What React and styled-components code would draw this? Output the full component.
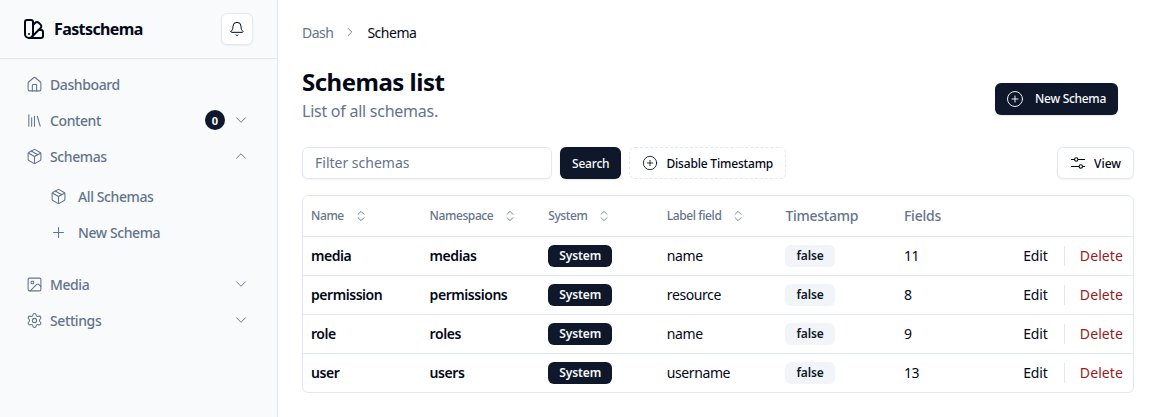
import React from 'react';
import styled, { createGlobalStyle } from 'styled-components';
import {
  Bell, ChevronDown, ChevronRight, ChevronUp, ChevronsUpDown, CirclePlus, House, Image, Library,
  Package, Plus, Settings, SwatchBook,
} from 'lucide-react';

const GlobalStyle = createGlobalStyle`
  * { box-sizing: border-box; }
  html, body { margin: 0; padding: 0; background: #fff; }
  body { font-family: "Noto Sans", "Liberation Sans", sans-serif; color: #020817; }
`;

const schemas = [
  { name: 'media', namespace: 'medias', label: 'name', fields: 11 },
  { name: 'permission', namespace: 'permissions', label: 'resource', fields: 8 },
  { name: 'role', namespace: 'roles', label: 'name', fields: 9 },
  { name: 'user', namespace: 'users', label: 'username', fields: 13 },
];

const Layout = styled.div`
  display: flex;
  width: 1156px;
  height: 417px;
  overflow: hidden;
`;

const Sidebar = styled.aside`
  width: 278px;
  flex-shrink: 0;
  background: #f8fafc;
  border-right: 1px solid #e2e8f0;
`;

const SidebarHead = styled.div`
  height: 59px;
  display: flex;
  align-items: center;
  justify-content: space-between;
  padding: 0 24px 1px 22px;
  border-bottom: 1px solid #e2e8f0;
`;

const Brand = styled.div`
  display: flex;
  align-items: center;
  gap: 8px;
  font-size: 16px;
  font-weight: 700;
  letter-spacing: -0.6px;
  color: #020817;
`;

const BellButton = styled.button`
  width: 32px;
  height: 32px;
  padding: 0;
  display: flex;
  align-items: center;
  justify-content: center;
  background: #fff;
  border: 1px solid #e2e8f0;
  border-radius: 6px;
  box-shadow: 0 1px 2px rgba(0, 0, 0, 0.05);
  color: #020817;
`;

const Nav = styled.nav`
  display: flex;
  flex-direction: column;
  padding-top: 7px;
`;

const NavItem = styled.div`
  height: 36px;
  display: flex;
  align-items: center;
  padding: 0 27px 0 ${p => (p.$sub ? '50px' : '26px')};
  gap: ${p => (p.$sub ? '11px' : '7px')};
  font-size: 14px;
  font-weight: 500;
  letter-spacing: -0.4px;
  color: #64748b;
`;

const NavLabel = styled.span`
  flex: 1;
`;

const CountBadge = styled.span`
  width: 20px;
  height: 20px;
  border-radius: 50%;
  display: flex;
  align-items: center;
  justify-content: center;
  background: #0f172a;
  color: #f8fafc;
  font-size: 11px;
  font-weight: 700;
  letter-spacing: 0;
`;

const SubNav = styled.div`
  display: flex;
  flex-direction: column;
  padding: 4px 0 16px;
`;

const Main = styled.main`
  flex: 1;
  min-width: 0;
  padding: 14px 22px 0 24px;
`;

const Crumbs = styled.div`
  height: 36px;
  display: flex;
  align-items: center;
  gap: 10px;
  font-size: 14px;
  letter-spacing: -0.5px;
  color: #64748b;
`;

const CrumbCurrent = styled.span`
  color: #020817;
`;

const TitleRow = styled.div`
  display: flex;
  align-items: center;
  justify-content: space-between;
  margin-top: 16px;
  padding-right: 16px;
`;

const Title = styled.h1`
  margin: 0 0 1px;
  font-size: 24px;
  line-height: 32px;
  font-weight: 700;
  letter-spacing: -0.5px;
  color: #020817;
`;

const Subtitle = styled.p`
  margin: 0;
  font-size: 16px;
  line-height: 24px;
  letter-spacing: -0.25px;
  color: #64748b;
`;

const PrimaryButton = styled.button`
  height: 32px;
  display: flex;
  align-items: center;
  padding: 0 12px;
  background: #0f172a;
  border: 0;
  border-radius: 6px;
  color: #f8fafc;
  font-family: inherit;
  font-size: 12px;
  font-weight: 500;
  letter-spacing: -0.2px;
  box-shadow: 0 1px 2px rgba(0, 0, 0, 0.1);
`;

const NewSchemaButton = styled(PrimaryButton)`
  margin-top: 8px;
  gap: 11px;
  padding-left: 11px;
  letter-spacing: -0.3px;
`;

const Toolbar = styled.div`
  display: flex;
  align-items: center;
  gap: 8px;
  margin-top: 24px;
`;

const FilterInput = styled.input`
  width: 250px;
  height: 32px;
  padding: 0 12px 2px;
  background: #fff;
  border: 1px solid #e2e8f0;
  border-radius: 6px;
  font-family: inherit;
  font-size: 14px;
  box-shadow: 0 1px 2px rgba(0, 0, 0, 0.05);
  &::placeholder { color: #64748b; opacity: 1; }
`;

const DashedButton = styled.button`
  height: 32px;
  display: flex;
  align-items: center;
  gap: 8px;
  padding: 0 12px;
  background: #fff;
  border: 1px dashed #e2e8f0;
  border-radius: 6px;
  color: #020817;
  font-family: inherit;
  font-size: 12px;
  font-weight: 500;
  letter-spacing: -0.18px;
`;

const ViewButton = styled.button`
  height: 32px;
  margin-left: auto;
  display: flex;
  align-items: center;
  gap: 8px;
  padding: 0 12px;
  background: #fff;
  border: 1px solid #e2e8f0;
  border-radius: 6px;
  color: #020817;
  font-family: inherit;
  font-size: 12px;
  font-weight: 500;
  box-shadow: 0 1px 2px rgba(0, 0, 0, 0.05);
`;

const TableWrap = styled.div`
  margin-top: 16px;
  border: 1px solid #e2e8f0;
  border-radius: 6px;
  overflow: hidden;
`;

const Table = styled.table`
  width: 100%;
  border-collapse: collapse;
  table-layout: fixed;
  font-size: 14px;
`;

const HeadCell = styled.th`
  height: 40px;
  padding: 0 8px;
  width: ${p => p.$width || 'auto'};
  text-align: left;
  font-size: ${p => (p.$plain ? '14px' : '12px')};
  font-weight: 500;
  letter-spacing: ${p => (p.$plain ? '-0.25px' : '-0.4px')};
  color: #64748b;
  border-bottom: 1px solid #e2e8f0;
`;

const HeadInner = styled.span`
  display: inline-flex;
  align-items: center;
  gap: 10px;
`;

const Row = styled.tr`
  height: 39px;
  & + & td { border-top: 1px solid #e2e8f0; }
`;

const Cell = styled.td`
  padding: 0 8px;
  font-weight: ${p => (p.$bold ? 600 : 400)};
  letter-spacing: ${p => (p.$bold ? '-0.45px' : '-0.4px')};
  color: #020817;
`;

const SystemBadge = styled.span`
  display: inline-flex;
  align-items: center;
  height: 22px;
  padding: 0 11px;
  border-radius: 6px;
  background: #0f172a;
  color: #f8fafc;
  font-size: 12px;
  font-weight: 600;
  letter-spacing: -0.1px;
`;

const FalseBadge = styled(SystemBadge)`
  background: #f1f5f9;
  color: #0f172a;
`;

const Actions = styled.div`
  display: flex;
  align-items: center;
  justify-content: flex-end;
  gap: 16px;
  padding-right: 2px;
  letter-spacing: 0;
`;

const EditLink = styled.span`
  color: #020817;
  letter-spacing: -0.1px;
`;

const DeleteLink = styled.span`
  padding-left: 15px;
  line-height: 20px;
  letter-spacing: 0.1px;
  border-left: 1px solid #e2e8f0;
  color: #991b1b;
`;

const navIcon = { size: 17, strokeWidth: 1.5 };
const caretIcon = { size: 18, strokeWidth: 1.25 };

// two-line slider glyph on the View button
const SlidersIcon = () => (
  <svg width="16" height="16" viewBox="0 0 16 16" fill="none" stroke="currentColor" strokeWidth="1.1">
    <path d="M1 4.5h3.5M8 4.5h7M1 11.5h8M12.5 11.5H15" />
    <circle cx="6.2" cy="4.5" r="1.7" />
    <circle cx="10.8" cy="11.5" r="1.7" />
  </svg>
);

const SortHead = ({ children, width }) => (
  <HeadCell $width={width}>
    <HeadInner>
      {children}
      <ChevronsUpDown size={14} strokeWidth={1.5} />
    </HeadInner>
  </HeadCell>
);

const App = () => (
  <Layout>
    <GlobalStyle />
    <Sidebar>
      <SidebarHead>
        <Brand>
          <SwatchBook size={24} strokeWidth={2} />
          Fastschema
        </Brand>
        <BellButton><Bell size={16} strokeWidth={1.5} /></BellButton>
      </SidebarHead>
      <Nav>
        <NavItem><House {...navIcon} /><NavLabel>Dashboard</NavLabel></NavItem>
        <NavItem>
          <Library {...navIcon} />
          <NavLabel>Content</NavLabel>
          <CountBadge>0</CountBadge>
          <ChevronDown {...caretIcon} />
        </NavItem>
        <NavItem>
          <Package {...navIcon} />
          <NavLabel>Schemas</NavLabel>
          <ChevronUp {...caretIcon} />
        </NavItem>
        <SubNav>
          <NavItem $sub><Package {...navIcon} /><NavLabel>All Schemas</NavLabel></NavItem>
          <NavItem $sub><Plus {...navIcon} /><NavLabel>New Schema</NavLabel></NavItem>
        </SubNav>
        <NavItem>
          <Image {...navIcon} />
          <NavLabel>Media</NavLabel>
          <ChevronDown {...caretIcon} />
        </NavItem>
        <NavItem>
          <Settings {...navIcon} />
          <NavLabel>Settings</NavLabel>
          <ChevronDown {...caretIcon} />
        </NavItem>
      </Nav>
    </Sidebar>
    <Main>
      <Crumbs>
        Dash
        <ChevronRight size={14} strokeWidth={1.5} />
        <CrumbCurrent>Schema</CrumbCurrent>
      </Crumbs>
      <TitleRow>
        <div>
          <Title>Schemas list</Title>
          <Subtitle>List of all schemas.</Subtitle>
        </div>
        <NewSchemaButton>
          <CirclePlus size={18} strokeWidth={1.25} />
          New Schema
        </NewSchemaButton>
      </TitleRow>
      <Toolbar>
        <FilterInput placeholder="Filter schemas" />
        <PrimaryButton>Search</PrimaryButton>
        <DashedButton><CirclePlus size={16} strokeWidth={1.25} />Disable Timestamp</DashedButton>
        <ViewButton><SlidersIcon />View</ViewButton>
      </Toolbar>
      <TableWrap>
        <Table>
          <thead>
            <tr>
              <SortHead width="118.6px">Name</SortHead>
              <SortHead width="118.6px">Namespace</SortHead>
              <SortHead width="118.6px">System</SortHead>
              <SortHead width="118.6px">Label field</SortHead>
              <HeadCell $width="118.6px" $plain>Timestamp</HeadCell>
              <HeadCell $width="118.6px" $plain>Fields</HeadCell>
              <HeadCell />
            </tr>
          </thead>
          <tbody>
            {schemas.map(schema => (
              <Row key={schema.name}>
                <Cell $bold>{schema.name}</Cell>
                <Cell $bold>{schema.namespace}</Cell>
                <Cell><SystemBadge>System</SystemBadge></Cell>
                <Cell>{schema.label}</Cell>
                <Cell><FalseBadge>false</FalseBadge></Cell>
                <Cell>{schema.fields}</Cell>
                <Cell>
                  <Actions>
                    <EditLink>Edit</EditLink>
                    <DeleteLink>Delete</DeleteLink>
                  </Actions>
                </Cell>
              </Row>
            ))}
          </tbody>
        </Table>
      </TableWrap>
    </Main>
  </Layout>
);

export default App;
